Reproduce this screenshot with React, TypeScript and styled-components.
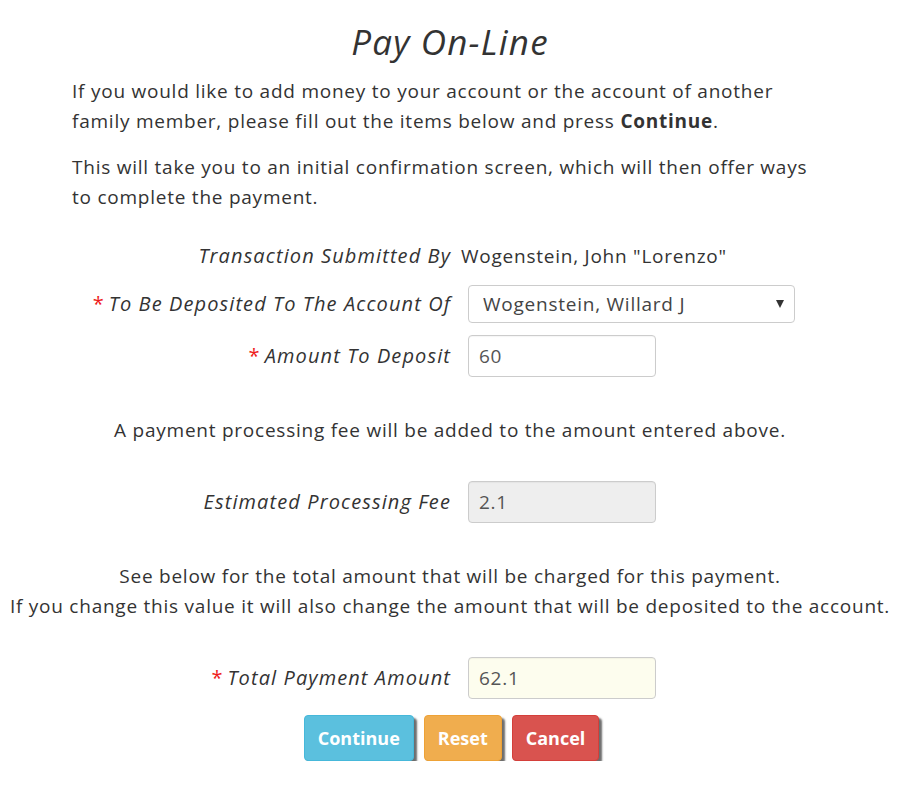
import React, { FC } from "react";
import styled, { createGlobalStyle } from "styled-components";

const GlobalStyle = createGlobalStyle`
  html, body {
    margin: 0;
    padding: 0;
    background: #fff;
  }
  body {
    font-family: "Open Sans", "DejaVu Sans", sans-serif;
    color: #333;
    font-size: 19px;
    letter-spacing: 0.76px;
  }
`

const Page = styled.div`
  width: 900px;
  padding-top: 22px;
`

const Title = styled.h1`
  margin: 0;
  text-align: center;
  font-style: italic;
  font-weight: 400;
  font-size: 35px;
  letter-spacing: 1.2px;
  line-height: 40px;
  color: #333;
`

const Intro = styled.div`
  padding: 14px 0 0 72px;
`

const Para = styled.p<{ $gap?: number }>`
  margin: 0 0 ${p => p.$gap ?? 0}px;
  line-height: 30px;
`

const Form = styled.form`
  display: flex;
  flex-direction: column;
`

const Row = styled.div<{ $top: number }>`
  display: grid;
  grid-template-columns: 451px 1fr;
  column-gap: 10px;
  align-items: center;
  margin-top: ${p => p.$top}px;
`

const Label = styled.label`
  text-align: right;
  font-style: italic;
  font-size: 20px;
  letter-spacing: 1.1px;
  line-height: 40px;
  color: #333;
`

const Required = styled.span`
  color: #ee1c1c;
  font-style: normal;
  margin-right: 4px;
`

const StaticValue = styled.span`
  line-height: 40px;
  color: #333;
`

const Input = styled.input<{ $bg?: string; $width?: number }>`
  box-sizing: border-box;
  margin-left: 7px;
  width: ${p => p.$width ?? 188}px;
  height: 42px;
  padding: 0 10px;
  border: 1px solid #ccc;
  border-radius: 4px;
  background: ${p => p.$bg ?? "#fff"};
  font-family: inherit;
  font-size: 19px;
  letter-spacing: 0.76px;
  color: #555;
  box-shadow: inset 0 1px 1px rgba(0, 0, 0, 0.04);
  outline: none;
`

const SelectWrap = styled.div`
  position: relative;
  margin-left: 7px;
  width: 327px;
`

const Select = styled.select`
  box-sizing: border-box;
  width: 100%;
  height: 38px;
  padding: 0 30px 0 14px;
  border: 1px solid #ccc;
  border-radius: 4px;
  background: #fff;
  font-family: inherit;
  font-size: 19px;
  letter-spacing: 0.76px;
  color: #444;
  appearance: none;
  -webkit-appearance: none;
  outline: none;
`

const Caret = styled.span`
  position: absolute;
  right: 11px;
  top: 15px;
  width: 0;
  height: 0;
  border-left: 4.5px solid transparent;
  border-right: 4.5px solid transparent;
  border-top: 8px solid #333;
  pointer-events: none;
`

const Note = styled.p<{ $top: number }>`
  margin: ${p => p.$top}px 0 0;
  text-align: center;
  line-height: 30px;
  color: #333;
`

const Buttons = styled.div`
  display: flex;
  justify-content: center;
  gap: 10px;
  margin-top: 16px;
  padding-left: 3px;
`

const Button = styled.button<{ $color: string; $border: string }>`
  height: 46px;
  padding: 0 13px;
  border: 1px solid ${p => p.$border};
  border-radius: 4px;
  background: ${p => p.$color};
  color: #fff;
  font-family: inherit;
  font-size: 18px;
  letter-spacing: 0;
  font-weight: 700;
  box-shadow: 3px 3px 2px rgba(60, 60, 60, 0.75);
  cursor: pointer;
`

const App: FC = () => {
    return (
        <Page>
            <GlobalStyle/>
            <Title>Pay On-Line</Title>
            <Intro>
                <Para $gap={16}>
                    If you would like to add money to your account or the account of another<br/>
                    family member, please fill out the items below and press <b>Continue</b>.
                </Para>
                <Para>
                    This will take you to an initial confirmation screen, which will then offer ways<br/>
                    to complete the payment.
                </Para>
            </Intro>
            <Form onSubmit={e => e.preventDefault()}>
                <Row $top={24}>
                    <Label>Transaction Submitted By</Label>
                    <StaticValue>Wogenstein, John "Lorenzo"</StaticValue>
                </Row>
                <Row $top={8}>
                    <Label htmlFor="account"><Required>*</Required>To Be Deposited To The Account Of</Label>
                    <SelectWrap>
                        <Select id="account" defaultValue="willard">
                            <option value="willard">Wogenstein, Willard J</option>
                            <option value="john">Wogenstein, John "Lorenzo"</option>
                        </Select>
                        <Caret/>
                    </SelectWrap>
                </Row>
                <Row $top={11}>
                    <Label htmlFor="amount"><Required>*</Required>Amount To Deposit</Label>
                    <Input id="amount" defaultValue="60"/>
                </Row>
                <Note $top={38}>A payment processing fee will be added to the amount entered above.</Note>
                <Row $top={36}>
                    <Label htmlFor="fee">Estimated Processing Fee</Label>
                    <Input id="fee" defaultValue="2.1" $bg="#eee" disabled/>
                </Row>
                <Note $top={38}>
                    See below for the total amount that will be charged for this payment.<br/>
                    If you change this value it will also change the amount that will be deposited to the account.
                </Note>
                <Row $top={36}>
                    <Label htmlFor="total"><Required>*</Required>Total Payment Amount</Label>
                    <Input id="total" defaultValue="62.1" $bg="#fdfdee"/>
                </Row>
                <Buttons>
                    <Button type="submit" $color="#5bc0de" $border="#46b8da">Continue</Button>
                    <Button type="reset" $color="#f0ad4e" $border="#eea236">Reset</Button>
                    <Button type="button" $color="#d9534f" $border="#d43f3a">Cancel</Button>
                </Buttons>
            </Form>
        </Page>
    )
}

export default App
